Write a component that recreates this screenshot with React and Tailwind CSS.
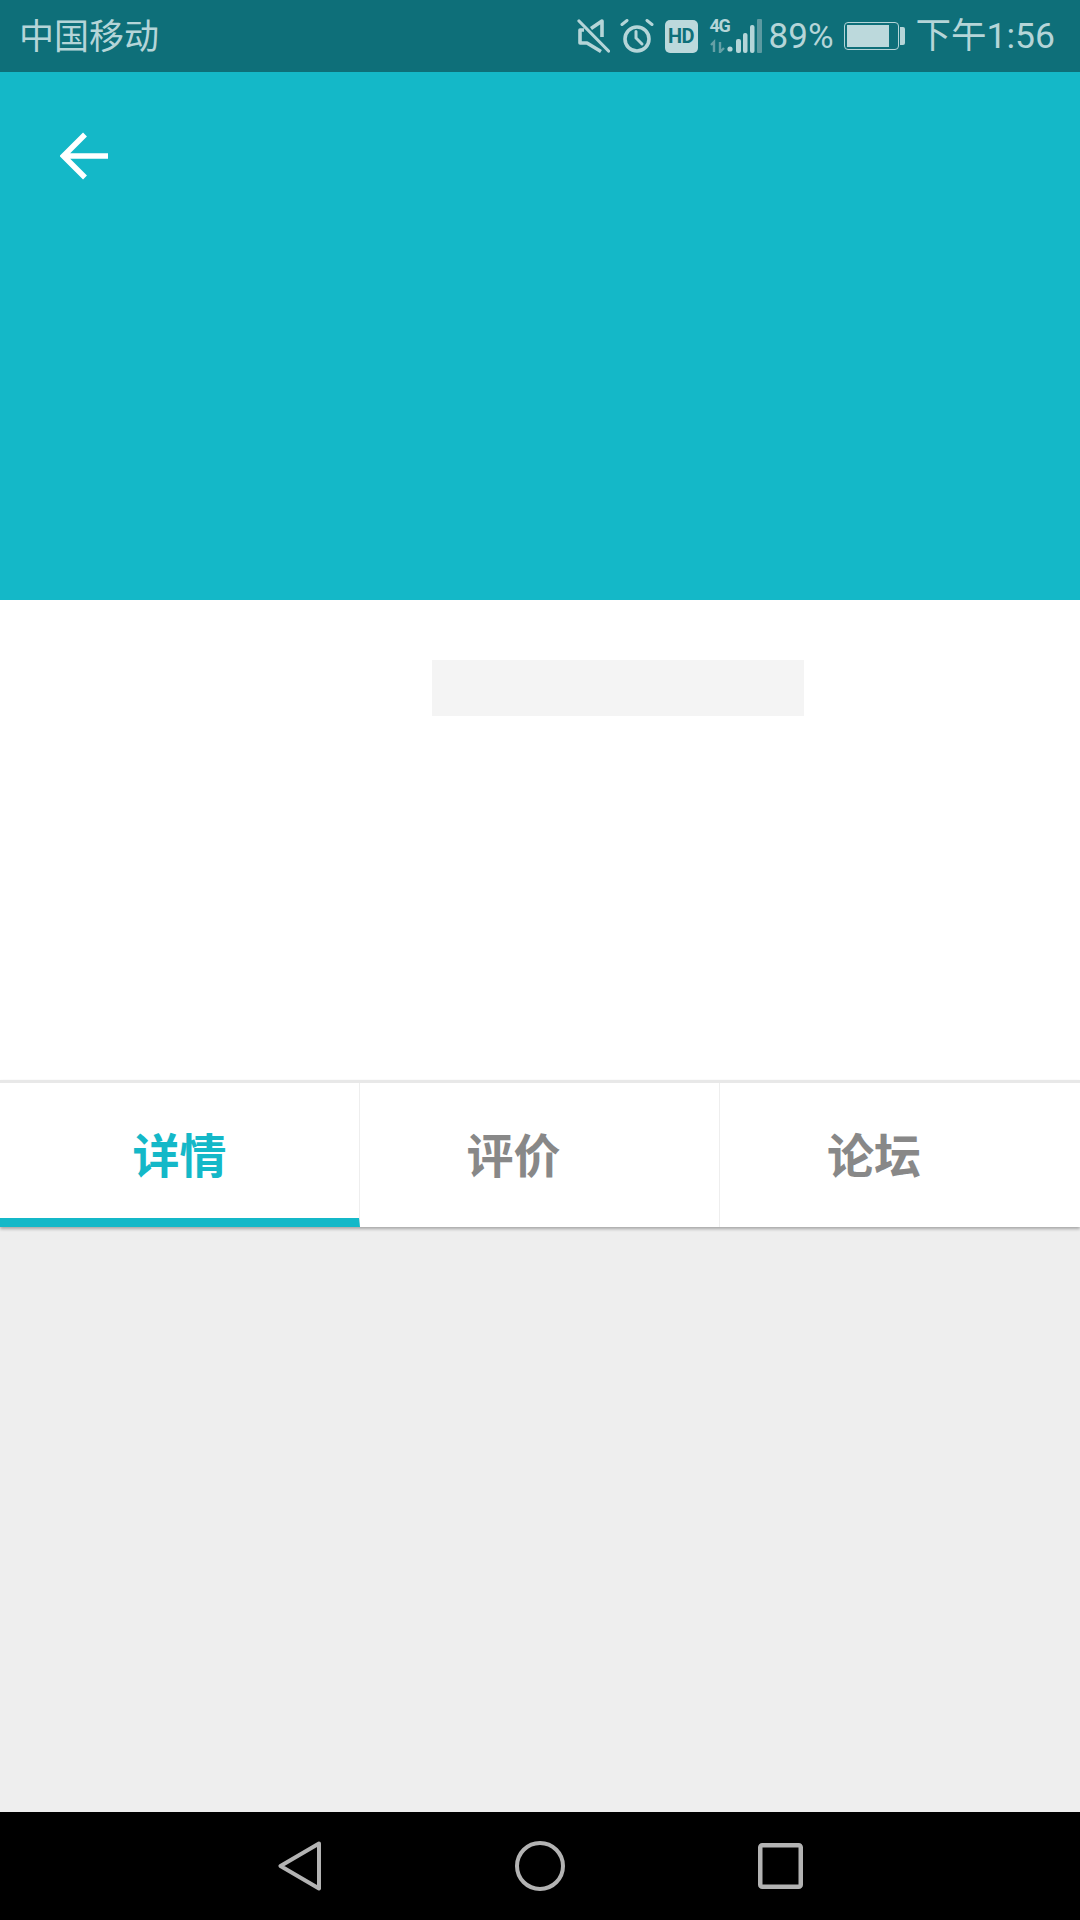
import React from "react";

const cjk = "font-['Roboto','Noto_Sans_CJK_SC',sans-serif]";

const StatusIcons = () => (
  <div className="flex items-center">
    {/* muted speaker */}
    <svg width="33" height="34" viewBox="0 0 33 34" fill="none" stroke="#b5d5d8" strokeWidth="3.6">
      <path d="M25 18V2L14 9.5M7 11H3v13h7l14 8.5" strokeLinejoin="round" />
      <path d="M2 2 31.5 32" strokeLinecap="round" strokeWidth="3.2" />
    </svg>
    {/* alarm */}
    <svg width="34" height="34" viewBox="0 0 34 34" className="ml-[10px]" fill="none" stroke="#b5d5d8" strokeWidth="3.6" strokeLinecap="round">
      <circle cx="17" cy="20" r="12" />
      <path d="M16 12.5V19l6 6" strokeWidth="3" />
      <path d="M2 5.5 7 1.5M32 5.5l-5-4" strokeWidth="3" />
    </svg>
    {/* HD badge */}
    <div className="ml-[11px] flex h-[33px] w-[33px] items-center justify-center rounded-[5px] bg-[#bcd9dc] text-[20px] leading-none font-bold tracking-[-0.5px] text-[#0e6f79] font-['Roboto',sans-serif]">
      HD
    </div>
    {/* 4G + signal */}
    <div className="relative ml-[12px] h-[34px] w-[52px]">
      <span className="absolute top-[-3px] left-0 text-[18px] leading-[20px] font-bold tracking-[-1.5px] text-[#b5d5d8] font-['Roboto',sans-serif]">4G</span>
      <svg width="52" height="34" viewBox="0 0 52 34" className="absolute inset-0">
        <path d="M4 33V23L1 26M10 23v10l4-4" stroke="#65a0a6" strokeWidth="2.4" fill="none" />
        <circle cx="20" cy="30" r="2.6" fill="#b5d5d8" />
        <rect x="26" y="20" width="5" height="14" rx="2" fill="#b5d5d8" />
        <rect x="33" y="14" width="4.5" height="20" rx="2" fill="#b5d5d8" />
        <rect x="40" y="6" width="4.5" height="28" rx="2" fill="#b5d5d8" />
        <rect x="47" y="0" width="5" height="34" rx="1" fill="#5c9aa1" />
      </svg>
    </div>
    <span className={`ml-[7px] text-[35px] leading-none text-[#b5d5d8] ${cjk}`}>89%</span>
    {/* battery */}
    <div className="ml-[10px] flex items-center">
      <div className="h-[28px] w-[55px] rounded-[4px] border-[1.5px] border-[#b5d5d8] p-[2px]">
        <div className="h-full w-[86%] bg-[#bcd9dc]" />
      </div>
      <div className="ml-[1px] h-[18px] w-[5px] rounded-r-[2px] bg-[#b5d5d8]" />
    </div>
    <span className={`ml-[11px] pt-[2px] text-[35.5px] leading-none text-[#b5d5d8] ${cjk}`}>下午1:56</span>
  </div>
);

const tabs = ["详情", "评价", "论坛"];

export default function App() {
  return (
    <div className="flex h-[1920px] w-[1080px] flex-col overflow-hidden bg-[#eeeeee]">
      {/* status bar */}
      <div className="flex h-[72px] shrink-0 items-center justify-between bg-[#0e6f79] pr-[25px] pl-[19px]">
        <span className={`pt-[3px] text-[35px] leading-none text-[#b5d5d8] ${cjk}`}>中国移动</span>
        <StatusIcons />
      </div>

      {/* banner */}
      <div className="h-[528px] shrink-0 bg-[#14b8c8] pt-[60px] pl-[60px]">
        <svg width="48" height="48" viewBox="0 0 48 48" fill="none" stroke="#ffffff" strokeWidth="5.5" className="block">
          <path d="M48 24H4M25 2.5 3.5 24 25 45.5" />
        </svg>
      </div>

      {/* info area */}
      <div className="h-[480px] shrink-0 bg-white pt-[60px] pl-[432px]">
        <div className="h-[56px] w-[372px] bg-[#f4f4f4]" />
      </div>

      {/* tabs */}
      <div className="grid h-[147px] shrink-0 grid-cols-3 border-t-[3px] border-[#e8e8e8] bg-white shadow-[0_2px_3px_rgba(0,0,0,0.3)]">
        {tabs.map((t, i) => (
          <div
            key={t}
            className={`flex h-full items-center justify-center text-[47px] leading-none font-bold font-['Noto_Sans_CJK_SC',sans-serif] ${
              i === 0 ? "border-b-[9px] border-b-[#14b8c8] pt-[3px] text-[#14b8c8]" : "pr-[52px] pb-[6px] text-[#888888]"
            } ${i < 2 ? "border-r border-r-[#eeeeee]" : ""}`}
          >
            {t}
          </div>
        ))}
      </div>

      <div className="flex-1" />

      {/* android nav bar */}
      <div className="flex h-[108px] shrink-0 items-center bg-black">
        <svg width="44" height="50" viewBox="0 0 44 50" fill="none" stroke="#b3b3b3" strokeWidth="4" strokeLinejoin="round" className="ml-[278px]">
          <path d="M41 2.5 2.5 25 41 47.5z" />
        </svg>
        <svg width="50" height="50" viewBox="0 0 50 50" fill="none" stroke="#b3b3b3" strokeWidth="4" className="ml-[193px]">
          <circle cx="25" cy="25" r="23" />
        </svg>
        <svg width="45" height="46" viewBox="0 0 45 46" fill="none" stroke="#b3b3b3" strokeWidth="4.5" className="ml-[193px]">
          <rect x="2.25" y="2.25" width="40.5" height="41.5" rx="2" />
        </svg>
      </div>
    </div>
  );
}
